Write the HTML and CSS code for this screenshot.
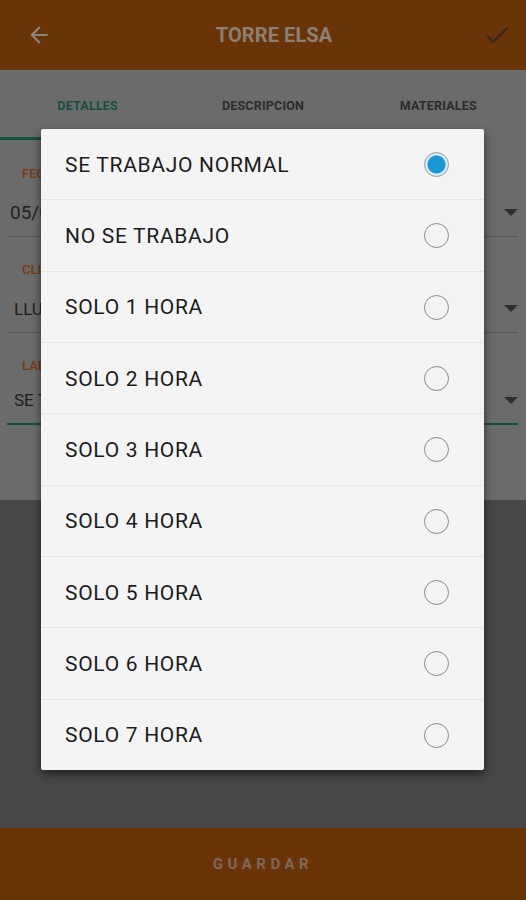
FILE: index.html
```html
<!DOCTYPE html>
<html lang="es">
<head>
    <meta charset="UTF-8">
    <meta name="viewport" content="width=device-width, initial-scale=1.0">
    <title>Torre Elsa</title>
    <link rel="stylesheet" href="styles.css">
</head>
<body>

    <div class="app">
        <header class="toolbar">
            <svg class="tb-icon" width="26" height="26" viewBox="0 0 24 24">
                <path d="M20 11H7.83l5.59-5.59L12 4l-8 8 8 8 1.41-1.41L7.83 13H20v-2z" fill="#8f8478"/>
            </svg>
            <h1 class="title">TORRE ELSA</h1>
            <svg class="tb-icon" width="30" height="30" viewBox="0 0 24 24">
                <path d="M9 16.17L4.83 12l-1.42 1.41L9 19 21 7l-1.41-1.41z" fill="#3a2a1e"/>
            </svg>
        </header>

        <nav class="tabs">
            <div class="tab active">DETALLES</div>
            <div class="tab">DESCRIPCION</div>
            <div class="tab">MATERIALES</div>
        </nav>

        <section class="form">
            <div class="field">
                <label class="field-label">FECHA</label>
                <div class="field-value date">05/03/2018 <span class="caret"></span></div>
            </div>
            <div class="field">
                <label class="field-label">CLIMA</label>
                <div class="field-value">LLUVIA <span class="caret"></span></div>
            </div>
            <div class="field focused">
                <label class="field-label">LABOR</label>
                <div class="field-value">SE TRABAJO <span class="caret"></span></div>
            </div>
        </section>

        <div class="filler"></div>

        <footer class="bottom-bar">GUARDAR</footer>
    </div>

    <div class="dialog">
        <div class="option"><span>SE TRABAJO NORMAL</span><span class="radio checked"></span></div>
        <div class="option"><span>NO SE TRABAJO</span><span class="radio"></span></div>
        <div class="option"><span>SOLO 1 HORA</span><span class="radio"></span></div>
        <div class="option"><span>SOLO 2 HORA</span><span class="radio"></span></div>
        <div class="option"><span>SOLO 3 HORA</span><span class="radio"></span></div>
        <div class="option"><span>SOLO 4 HORA</span><span class="radio"></span></div>
        <div class="option"><span>SOLO 5 HORA</span><span class="radio"></span></div>
        <div class="option"><span>SOLO 6 HORA</span><span class="radio"></span></div>
        <div class="option"><span>SOLO 7 HORA</span><span class="radio"></span></div>
    </div>

</body>
</html>
```

FILE: styles.css
```css
* {
    box-sizing: border-box;
}
body {
    margin: 0;
    font-family: Roboto, "Noto Sans", sans-serif;
    background-color: #474747;
    overflow: hidden;
}
.app {
    display: flex;
    flex-direction: column;
    height: 900px;
}
.toolbar {
    height: 70px;
    background-color: #6a3409;
    display: flex;
    align-items: center;
    justify-content: space-between;
    padding: 0 14px 0 26px;
}
.title {
    margin: 0;
    font-size: 20px;
    font-weight: 700;
    color: #8d7f72;
    padding-left: 14px;
    letter-spacing: 0.1px;
}
.tabs {
    display: flex;
    height: 70px;
    background-color: #6b6b6b;
}
.tab {
    flex: 1;
    display: flex;
    align-items: center;
    justify-content: center;
    font-size: 12.5px;
    font-weight: 700;
    letter-spacing: 0.2px;
    color: #2c2c2c;
    border-bottom: 3px solid transparent;
    padding-top: 3px;
}
.tab.active {
    color: #15503f;
    border-bottom-color: #15503f;
}
.form {
    background-color: #6b6b6b;
    padding: 20px 8px 0 7px;
    height: 360px;
}
.field {
    height: 96px;
    display: flex;
    flex-direction: column;
}
.field-label {
    font-size: 13px;
    font-weight: 500;
    color: #7a3a10;
    padding-left: 15px;
    margin-top: 6px;
}
.field-value {
    display: flex;
    align-items: center;
    justify-content: space-between;
    height: 56px;
    padding: 8px 0 0 7px;
    font-size: 17px;
    color: #1e1e1e;
    border-bottom: 1px solid #555;
}
.field-value.date {
    font-size: 19px;
    padding-left: 3px;
}
.field.focused .field-value {
    height: 52px;
    padding-top: 4px;
    border-bottom: 2px solid #15503f;
}
.caret {
    width: 0;
    height: 0;
    border-left: 7px solid transparent;
    border-right: 7px solid transparent;
    border-top: 7px solid #2e2e2e;
}
.filler {
    flex: 1;
    background-color: #474747;
}
.bottom-bar {
    height: 72px;
    background-color: #6a3409;
    display: flex;
    align-items: center;
    justify-content: center;
    color: #7d6858;
    font-size: 15px;
    font-weight: 700;
    letter-spacing: 4.5px;
}
.dialog {
    position: absolute;
    left: 41px;
    top: 129px;
    width: 443px;
    height: 641px;
    background-color: #f4f4f4;
    border-radius: 2px;
    box-shadow: 0 4px 10px rgba(0, 0, 0, 0.55);
    display: flex;
    flex-direction: column;
}
.option {
    flex: 1;
    display: flex;
    align-items: center;
    justify-content: space-between;
    padding: 1px 35px 0 24px;
    font-size: 21px;
    letter-spacing: 0.7px;
    color: #1c1c1c;
    border-top: 1px solid #e6e6e6;
}
.option:first-child {
    border-top: none;
}
.radio {
    width: 25px;
    height: 25px;
    border-radius: 50%;
    border: 1.5px solid #8a8a8a;
}
.radio.checked {
    border: 1.5px solid #9a9a9a;
    background: radial-gradient(circle, #1a96d4 0 8.5px, #d7eef9 9.5px);
}
```
